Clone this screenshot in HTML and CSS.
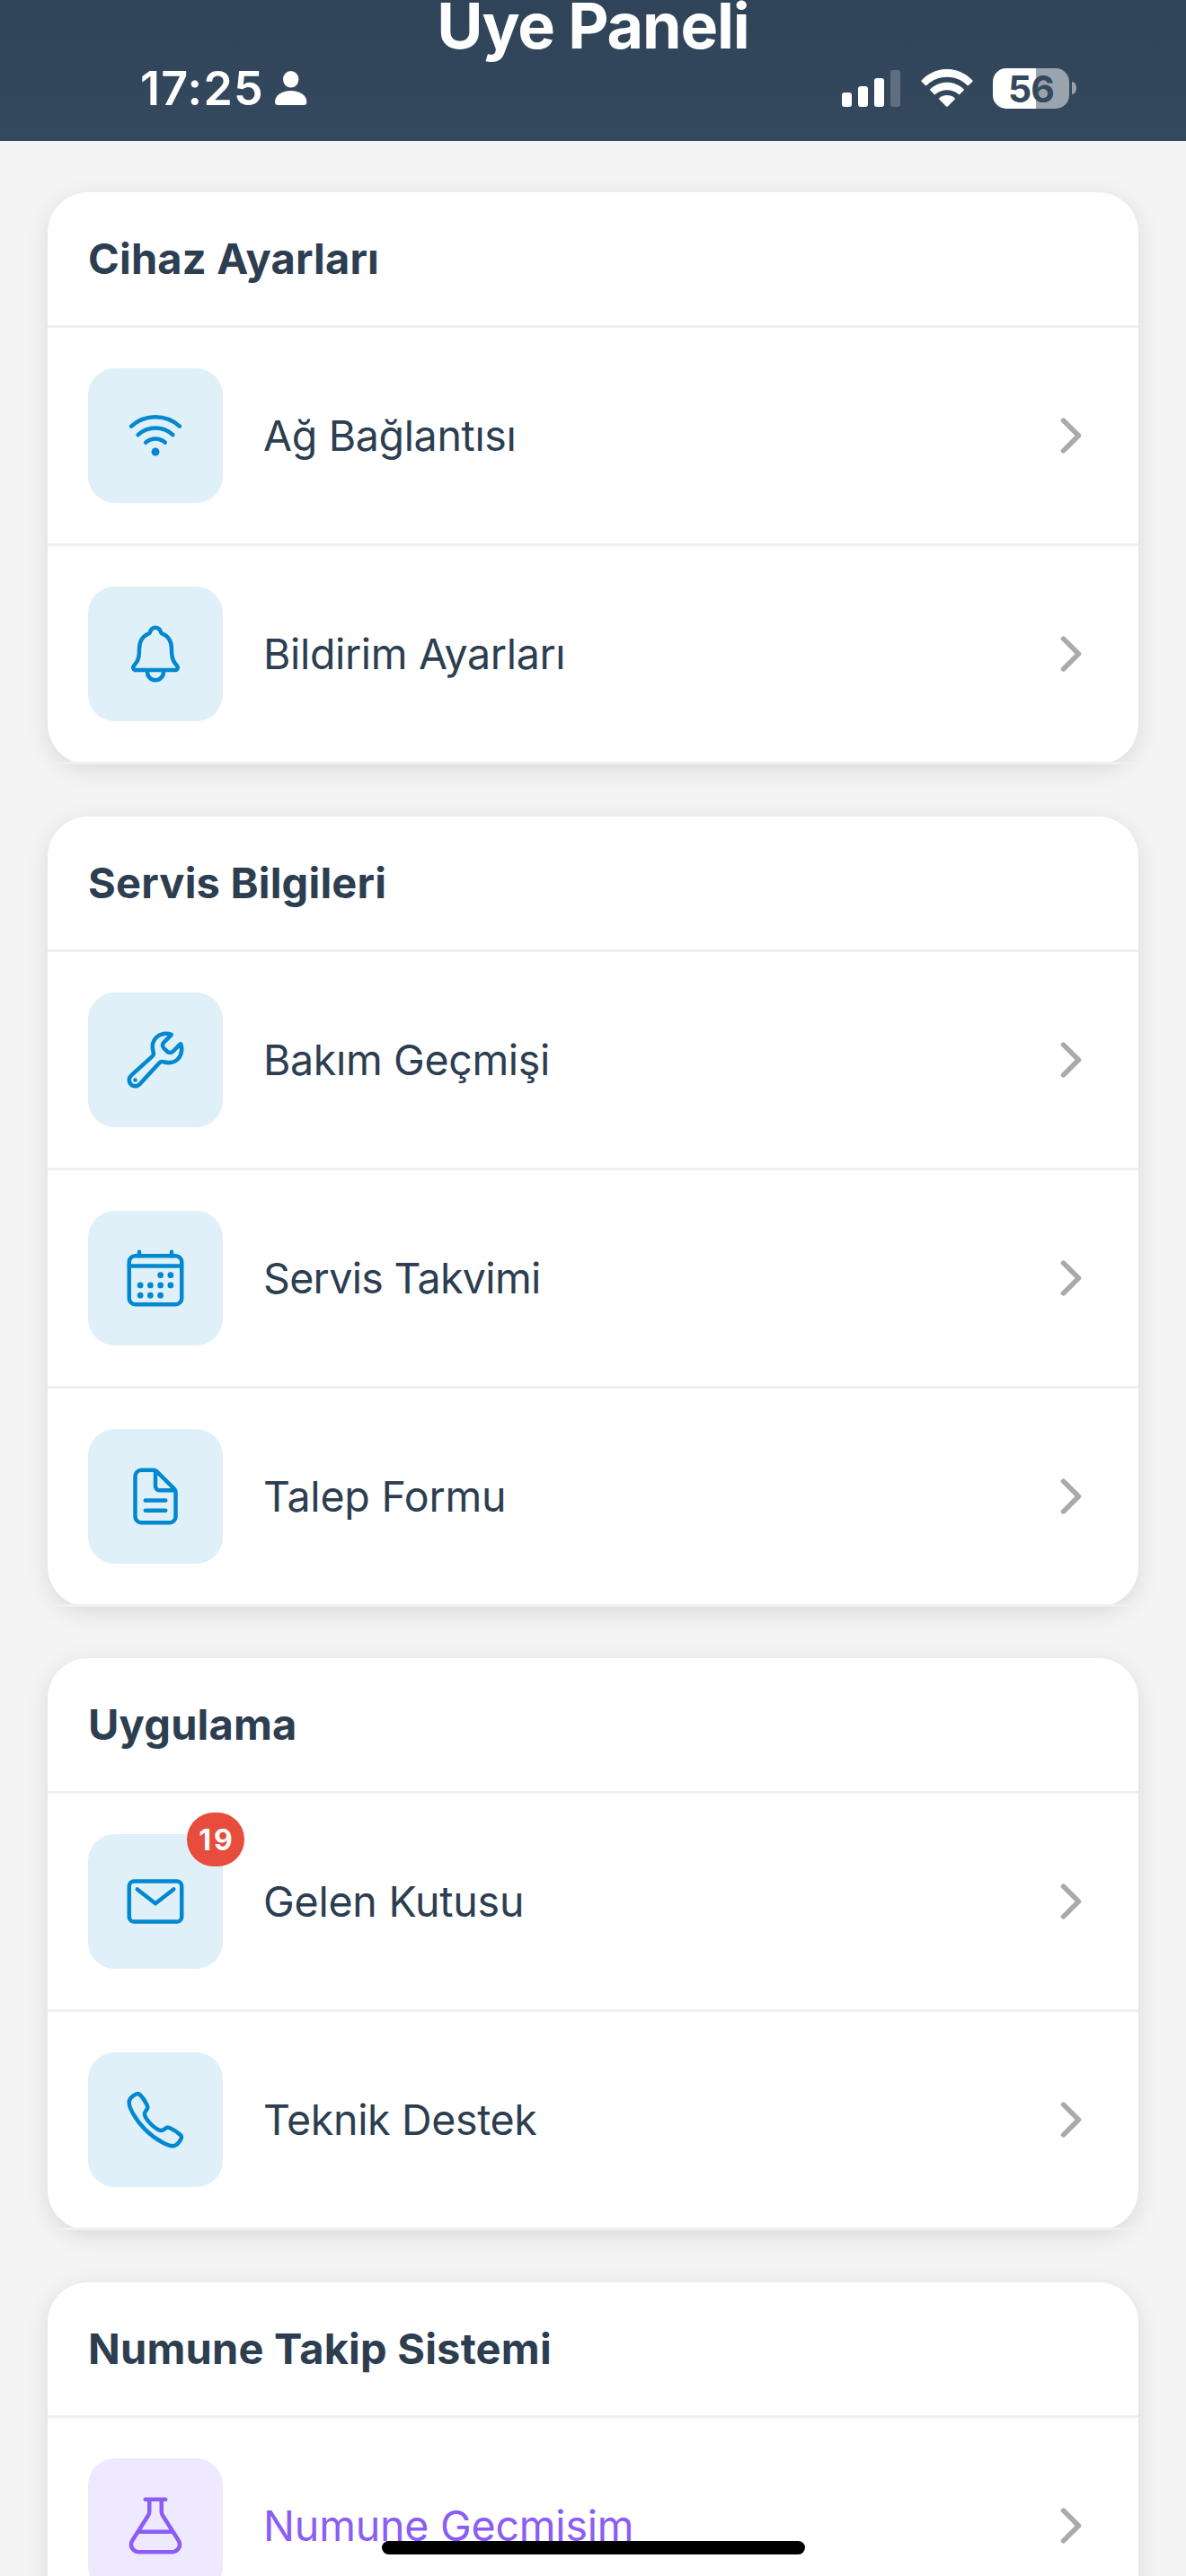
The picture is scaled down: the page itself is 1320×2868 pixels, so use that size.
FILE: index.html
```html
<!DOCTYPE html>
<html lang="tr">
<head>
<meta charset="utf-8">
<title>Üye Paneli</title>
<link rel="stylesheet" href="styles.css">
</head>
<body>
<svg class="sprite" xmlns="http://www.w3.org/2000/svg">
  <symbol id="chevron" viewBox="0 0 512 512"><path stroke-width="48" d="M184 112l144 144-144 144"/></symbol>
  <symbol id="wifi" viewBox="0 0 512 512">
    <path d="M332.41 310.59a115 115 0 00-152.8 0M393.46 249.54a201.26 201.26 0 00-274.92 0M447.72 182.11a288 288 0 00-383.44 0"/>
    <circle cx="256" cy="384" r="32" fill="currentColor" stroke="none"/>
  </symbol>
  <symbol id="bell" viewBox="0 0 512 512"><path d="M427.68 351.43C402 320 383.87 304 383.87 217.35 383.87 138 343.35 109.73 310 96c-4.43-1.82-8.6-6-9.95-10.55C294.2 65.54 277.8 48 256 48s-38.21 17.55-44 37.47c-1.35 4.6-5.52 8.71-9.95 10.53-33.39 13.75-73.87 41.92-73.87 121.35C128.13 304 110 320 84.32 351.43 73.68 364.45 83 384 101.61 384h308.88c18.51 0 27.77-19.61 17.19-32.57zM320 384v16a64 64 0 01-128 0v-16"/></symbol>
  <symbol id="wrench" viewBox="0 0 512 512">
    <path d="M393.87 190a32.1 32.1 0 01-45.25 0l-26.57-26.57a32.09 32.09 0 010-45.26L382.19 58a1 1 0 00-.3-1.64c-38.82-16.64-89.15-8.16-121.11 23.57-30.58 30.35-32.32 76-21.12 115.84a31.93 31.93 0 01-9.06 32.08L64 380a48.17 48.17 0 1068 68l153.86-167a31.93 31.93 0 0131.6-9.13c39.54 10.59 84.54 8.6 114.72-21.19 32.49-32 39.5-88.56 23.75-120.93a1 1 0 00-1.6-.26z"/>
    <circle cx="96" cy="416" r="16" fill="currentColor" stroke="none"/>
  </symbol>
  <symbol id="calendar" viewBox="0 0 512 512">
    <rect x="48" y="80" width="416" height="384" rx="48"/>
    <path d="M128 48v32M384 48v32M464 160H48"/>
    <g fill="currentColor" stroke="none">
      <circle cx="296" cy="232" r="24"/><circle cx="376" cy="232" r="24"/>
      <circle cx="136" cy="312" r="24"/><circle cx="216" cy="312" r="24"/><circle cx="296" cy="312" r="24"/><circle cx="376" cy="312" r="24"/>
      <circle cx="136" cy="392" r="24"/><circle cx="216" cy="392" r="24"/><circle cx="296" cy="392" r="24"/>
    </g>
  </symbol>
  <symbol id="document" viewBox="0 0 512 512"><path d="M416 221.25V416a48 48 0 01-48 48H144a48 48 0 01-48-48V96a48 48 0 0148-48h98.75a32 32 0 0122.62 9.37l141.26 141.26a32 32 0 019.37 22.62zM256 56v120a32 32 0 0032 32h120M176 288h160M176 368h160"/></symbol>
  <symbol id="mail" viewBox="0 0 512 512"><rect x="48" y="96" width="416" height="320" rx="40"/><path d="M112 160l144 112 144-112"/></symbol>
  <symbol id="phone" viewBox="0 0 512 512"><path d="M451 374c-15.88-16-54.34-39.35-73-48.76-24.3-12.24-26.3-13.24-45.4.95-12.74 9.47-21.21 17.93-36.12 14.75s-47.31-21.11-75.68-49.39-47.34-61.62-50.53-76.48 5.41-23.23 14.79-36c13.22-18 12.22-21 .92-45.3-8.81-18.9-32.84-57-48.9-72.8C119.9 44 119.9 47 108.83 51.6A160.15 160.15 0 0083 65.37C67 76 58.12 84.83 51.91 98.1s-9 44.38 23.07 102.64 54.57 88.05 101.14 134.49S258.5 406.64 310.85 436c64.76 36.27 89.6 29.2 102.91 23s22.18-15 32.83-31a159.09 159.09 0 0013.8-25.8C465 391.17 468 391.17 451 374z"/></symbol>
  <symbol id="flask" viewBox="0 0 512 512"><path d="M208 48v93.48a64.09 64.09 0 01-9.88 34.18L73.21 373.49C48.4 412.78 76.87 464 123.32 464h265.36c46.45 0 74.92-51.22 50.11-90.51L313.88 175.66a64.09 64.09 0 01-9.88-34.18V48M176 48h160M118.55 304h274.9"/></symbol>
</svg>

<div class="screen">
  <header class="header">
    <h1 class="title">Üye Paneli</h1>
    <div class="status">
      <span class="clock">17:25</span>
      <svg class="person" viewBox="0 0 36 38"><ellipse cx="17.7" cy="9.3" rx="8.7" ry="9.3"/><path d="M3.5 38Q0 38 0 34.5C0 27 8 22 17.7 22S35.400 27 35.400 34.500Q35.400 38 32 38Z"/></svg>
      <div class="indicators">
        <svg class="signal" viewBox="0 0 65 41"><rect y="25" width="11" height="16" rx="3"/><rect x="18" y="18" width="11" height="23" rx="3"/><rect x="36" y="9" width="11" height="32" rx="3"/><rect x="54" width="11" height="41" rx="3" opacity=".22"/></svg>
        <svg class="wifi-bars" viewBox="0 0 58 42"><path d="M.6 12.500C16-4.200 42-4.200 57.400 12.500Q57.900 13.200 57.400 13.800L53 18.100Q52.300 18.600 51.600 18C39 5.800 19 5.800 6.400 18Q5.700 18.600 5 18.100L.6 13.800Q.1 13.200.6 12.500Z"/><path d="M10.300 22.300C20.700 12.100 37.300 12.100 47.700 22.300Q48.300 23 47.700 23.600L43.200 28Q42.500 28.600 41.800 28C34.500 21.800 23.500 21.800 16.200 28Q15.500 28.600 14.800 28L10.300 23.600Q9.700 23 10.300 22.300Z"/><path d="M20.300 32.300C25 27.900 33 27.900 37.700 32.300Q38.300 33 37.700 33.600L29.800 41.500Q29 42.200 28.200 41.500L20.300 33.600Q19.700 33 20.300 32.300Z"/></svg>
        <div class="battery"><span class="level">56</span><span class="nub"></span></div>
      </div>
    </div>
  </header>

  <main class="sections">
    <section class="card">
      <h2 class="card-title">Cihaz Ayarları</h2>
      <a class="row"><span class="tile"><svg class="icon"><use href="#wifi"/></svg></span><span class="label">Ağ Bağlantısı</span><svg class="chevron"><use href="#chevron"/></svg></a>
      <a class="row"><span class="tile"><svg class="icon"><use href="#bell"/></svg></span><span class="label">Bildirim Ayarları</span><svg class="chevron"><use href="#chevron"/></svg></a>
    </section>

    <section class="card">
      <h2 class="card-title">Servis Bilgileri</h2>
      <a class="row"><span class="tile"><svg class="icon"><use href="#wrench"/></svg></span><span class="label">Bakım Geçmişi</span><svg class="chevron"><use href="#chevron"/></svg></a>
      <a class="row"><span class="tile"><svg class="icon"><use href="#calendar"/></svg></span><span class="label label-tight">Servis Takvimi</span><svg class="chevron"><use href="#chevron"/></svg></a>
      <a class="row"><span class="tile"><svg class="icon"><use href="#document"/></svg></span><span class="label label-loose">Talep Formu</span><svg class="chevron"><use href="#chevron"/></svg></a>
    </section>

    <section class="card">
      <h2 class="card-title">Uygulama</h2>
      <a class="row"><span class="tile"><svg class="icon"><use href="#mail"/></svg><span class="badge">19</span></span><span class="label label-loose">Gelen Kutusu</span><svg class="chevron"><use href="#chevron"/></svg></a>
      <a class="row"><span class="tile"><svg class="icon"><use href="#phone"/></svg></span><span class="label">Teknik Destek</span><svg class="chevron"><use href="#chevron"/></svg></a>
    </section>

    <section class="card">
      <h2 class="card-title">Numune Takip Sistemi</h2>
      <a class="row row-purple"><span class="tile"><svg class="icon"><use href="#flask"/></svg></span><span class="label label-loose">Numune Gecmisim</span><svg class="chevron"><use href="#chevron"/></svg></a>
    </section>
  </main>
  <div class="home-indicator"></div>
</div>
</body>
</html>
```
FILE: styles.css
```css
* { box-sizing: border-box; }

body {
  margin: 0;
  font-family: Inter, "Liberation Sans", sans-serif;
  color: #2c3e50;
  background: #f4f4f4;
}

.sprite { position: absolute; width: 0; height: 0; }

.screen {
  position: relative;
  width: 1320px;
  height: 2868px;
  overflow: hidden;
  background: #f4f4f4;
}

/* Header and status bar */
.header {
  height: 157px;
  overflow: hidden;
  background: linear-gradient(#304459, #34495e);
  color: #fff;
}

.title {
  margin: -11px 0 0;
  font-size: 70px;
  font-weight: 700;
  line-height: 80px;
  letter-spacing: -1.14px;
  text-align: center;
}

.status {
  display: flex;
  align-items: center;
  height: 60px;
  margin-top: -1px;
  padding: 0 122px 0 156px;
}

.status svg { fill: #fff; }

.clock {
  width: 150px;
  font-size: 52px;
  font-weight: 600;
  letter-spacing: 1.2px;
}

.person { width: 36px; height: 38px; }

.indicators {
  display: flex;
  align-items: center;
  margin-left: auto;
}

.signal { width: 65px; height: 41px; margin-right: 23px; }
.wifi-bars { width: 58px; height: 42px; margin-right: 22px; }

.battery { display: flex; align-items: center; gap: 3px; }

.level {
  width: 85px;
  height: 45px;
  border-radius: 15px;
  background: linear-gradient(90deg, #fff 48px, #99a4af 48px);
  color: #34495e;
  font-size: 41px;
  font-weight: 650;
  line-height: 46px;
  letter-spacing: -0.8px;
  text-align: center;
}

.nub {
  width: 5px;
  height: 14px;
  border-radius: 0 5px 5px 0 / 0 7px 7px 0;
  background: #99a4af;
}

/* Cards */
.sections {
  display: flex;
  flex-direction: column;
  gap: 57.67px;
  padding: 57px 53px 0;
}

.card {
  border-radius: 45px;
  background: #fff;
  box-shadow: 0 6px 26px rgba(0, 0, 0, 0.11);
}

.card-title {
  height: 151px;
  margin: 0;
  padding: 0 45px;
  border-bottom: 3px solid #f0f0f0;
  font-size: 47px;
  font-weight: 650;
  line-height: 148px;
  letter-spacing: 0.2px;
}

.row {
  display: flex;
  align-items: center;
  height: 243px;
  padding: 0 45px;
  border-bottom: 3px solid #f0f0f0;
}

.tile {
  position: relative;
  display: flex;
  align-items: center;
  justify-content: center;
  width: 150px;
  height: 150px;
  border-radius: 30px;
  background: #dff0f8;
  color: #0288d1;
}

.icon,
.chevron {
  fill: none;
  stroke: currentColor;
  stroke-width: 32;
  stroke-linecap: round;
  stroke-linejoin: round;
}

.icon { width: 72px; height: 72px; }
.chevron { width: 60px; height: 60px; color: #aaa; }

.label {
  flex: 1;
  margin-left: 45px;
  font-size: 46.5px;
  letter-spacing: -0.34px;
}

.label-tight { letter-spacing: -0.66px; }
.label-loose { letter-spacing: -0.2px; }

.row-purple .tile { background: #efe9ff; color: #8b5cf6; }
.row-purple .label { color: #8b5cf6; }

.badge {
  position: absolute;
  top: -24px;
  right: -24px;
  width: 64px;
  height: 60px;
  border-radius: 30px;
  background: #e74c3c;
  color: #fff;
  font-size: 32px;
  font-weight: 700;
  line-height: 61px;
  letter-spacing: 3px;
  text-indent: 3px;
  text-align: center;
}

.home-indicator {
  position: absolute;
  left: 425px;
  bottom: 24px;
  width: 471px;
  height: 15px;
  border-radius: 8px;
  background: #000;
}
```
